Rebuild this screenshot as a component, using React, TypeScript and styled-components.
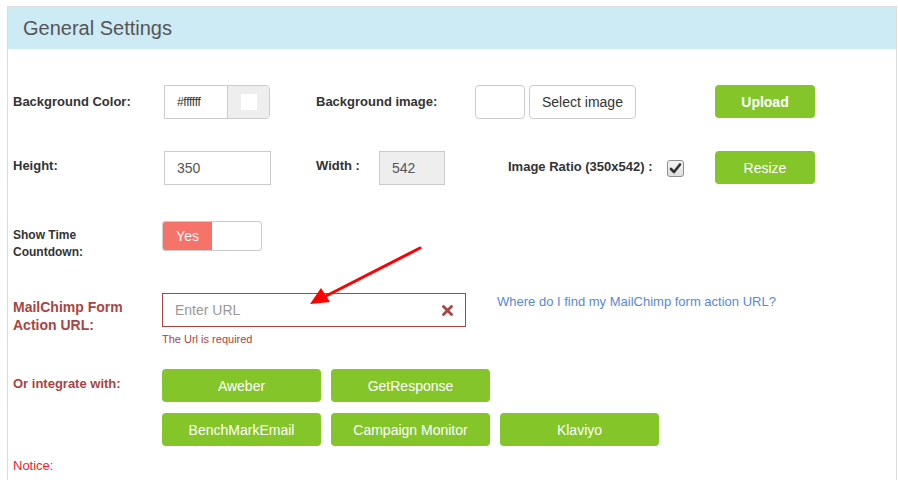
import React from 'react';
import styled, { createGlobalStyle } from 'styled-components';

const GlobalStyle = createGlobalStyle`
  html, body {
    margin: 0;
    padding: 0;
    background: #fff;
    font-family: "Liberation Sans", Arial, sans-serif;
    color: #333;
  }
`;

const Panel = styled.div`
  position: relative;
  margin: 6px 0 0 7px;
  width: 890px;
  height: 480px;
  box-sizing: border-box;
  border: 1px solid #dddddd;
  border-bottom: none;
`;

const Header = styled.div`
  height: 42px;
  background: #cdebf5;
  display: flex;
  align-items: center;
  padding-left: 15px;
  font-size: 20px;
  color: #555;
`;

const Body = styled.div`
  padding: 36px 0 0 5px;
`;

const Row = styled.div<{ $mb: number }>`
  display: flex;
  align-items: flex-start;
  margin-bottom: ${(p) => p.$mb}px;
`;

const Label = styled.div<{ $w: number; $error?: boolean; $small?: boolean; $pt?: number }>`
  width: ${(p) => p.$w}px;
  flex: none;
  box-sizing: border-box;
  padding-top: ${(p) => p.$pt ?? 8}px;
  font-size: ${(p) => (p.$small ? 12 : p.$error ? 14 : 13)}px;
  line-height: ${(p) => (p.$small ? 17 : 18)}px;
  font-weight: bold;
  color: ${(p) => (p.$error ? '#a94442' : '#333')};
`;

const Cell = styled.div<{ $w: number }>`
  width: ${(p) => p.$w}px;
  height: 34px;
  flex: none;
  display: flex;
  align-items: center;
  gap: 4px;
`;

const TextBox = styled.div<{ $w: number; $disabled?: boolean; $error?: boolean }>`
  width: ${(p) => p.$w}px;
  height: 34px;
  box-sizing: border-box;
  border: 1px solid ${(p) => (p.$error ? '#a94442' : '#cccccc')};
  background: ${(p) => (p.$disabled ? '#eeeeee' : '#fff')};
  display: flex;
  align-items: center;
  justify-content: space-between;
  padding: 0 12px;
  font-size: 14px;
  color: #555;
`;

const Placeholder = styled.span`
  color: #999;
`;

const ColorGroup = styled.div`
  display: flex;
  width: 106px;
  height: 34px;
  box-sizing: border-box;
  border: 1px solid #cccccc;
  border-radius: 0 4px 4px 0;
  overflow: hidden;
`;

const ColorText = styled.div`
  flex: 1;
  display: flex;
  align-items: center;
  padding-left: 12px;
  font-size: 12px;
  letter-spacing: -0.3px;
  color: #333;
`;

const ColorAddon = styled.div`
  width: 41px;
  background: #eeeeee;
  border-left: 1px solid #cccccc;
  display: flex;
  align-items: center;
  justify-content: center;
`;

const Swatch = styled.div`
  width: 16px;
  height: 16px;
  background: #fff;
`;

const ImageBox = styled.div`
  width: 50px;
  height: 34px;
  box-sizing: border-box;
  border: 1px solid #cccccc;
  border-radius: 4px;
`;

const DefaultButton = styled.button`
  height: 34px;
  padding: 0 12px;
  border: 1px solid #cccccc;
  border-radius: 4px;
  background: #fff;
  font-family: inherit;
  font-size: 14px;
  color: #333;
`;

const GreenButton = styled.button<{ $bold?: boolean }>`
  width: 100px;
  height: 33px;
  border: none;
  border-radius: 4px;
  background: #84c52a;
  color: #fff;
  font-family: inherit;
  font-size: 14px;
  font-weight: ${(p) => (p.$bold ? 'bold' : 'normal')};
  padding: 0;
`;

const IntegrationButton = styled(GreenButton)`
  width: 159px;
`;

const Toggle = styled.div`
  display: flex;
  width: 100px;
  height: 30px;
  box-sizing: border-box;
  border: 1px solid #cccccc;
  border-radius: 3px;
  overflow: hidden;
`;

const ToggleOn = styled.div`
  width: 49px;
  background: #f6736a;
  color: #fff;
  font-size: 14px;
  display: flex;
  align-items: center;
  justify-content: center;
`;

const FieldColumn = styled.div`
  display: flex;
  flex-direction: column;
  width: 335px;
  flex: none;
`;

const ErrorText = styled.div`
  margin-top: 5px;
  font-size: 11px;
  line-height: 14px;
  color: #a94442;
`;

const HelpLink = styled.a`
  margin-top: 1px;
  font-size: 13px;
  line-height: 16px;
  color: #5a88d2;
  text-decoration: none;
`;

const ButtonGrid = styled.div`
  display: flex;
  flex-direction: column;
  gap: 11px;
`;

const ButtonRow = styled.div`
  display: flex;
  gap: 10px;
`;

const Notice = styled.div`
  font-size: 13px;
  color: #f0262b;
`;

const Arrow = styled.svg`
  position: absolute;
  left: 296px;
  top: 234px;
  pointer-events: none;
`;

const CheckIcon = () => (
  <svg width="17" height="17" viewBox="0 0 17 17">
    <defs>
      <linearGradient id="cb" x1="0" y1="0" x2="0" y2="1">
        <stop offset="0" stopColor="#f4f4f4" />
        <stop offset="1" stopColor="#dedede" />
      </linearGradient>
    </defs>
    <rect x="0.5" y="0.5" width="16" height="16" rx="2.5" fill="url(#cb)" stroke="#8f8f8f" />
    <path d="M4 9 L7 12 L13 4.5" fill="none" stroke="#333" strokeWidth="2.6" strokeLinecap="round" strokeLinejoin="round" />
  </svg>
);

const TimesIcon = () => (
  <svg width="11" height="11" viewBox="0 0 11 11">
    <path d="M1.5 1.5 L9.5 9.5 M9.5 1.5 L1.5 9.5" stroke="#a94442" strokeWidth="2.8" strokeLinecap="round" />
  </svg>
);

const integrationRows = [
  ['Aweber', 'GetResponse'],
  ['BenchMarkEmail', 'Campaign Monitor', 'Klaviyo'],
];

export default function App() {
  return (
    <>
      <GlobalStyle />
      <Panel>
        <Header>General Settings</Header>
        <Body>
          <Row $mb={32}>
            <Label $w={151}>Background Color:</Label>
            <Cell $w={152}>
              <ColorGroup>
                <ColorText>#ffffff</ColorText>
                <ColorAddon>
                  <Swatch />
                </ColorAddon>
              </ColorGroup>
            </Cell>
            <Label $w={159}>Background image:</Label>
            <Cell $w={240}>
              <ImageBox />
              <DefaultButton type="button">Select image</DefaultButton>
            </Cell>
            <GreenButton type="button" $bold>Upload</GreenButton>
          </Row>

          <Row $mb={36}>
            <Label $w={151} $pt={6}>Height:</Label>
            <Cell $w={152}>
              <TextBox $w={107}>350</TextBox>
            </Cell>
            <Label $w={63} $pt={6}>Width :</Label>
            <Cell $w={129}>
              <TextBox $w={66} $disabled>542</TextBox>
            </Cell>
            <Label $w={159} $pt={7}>Image Ratio (350x542) :</Label>
            <Cell $w={48}>
              <CheckIcon />
            </Cell>
            <GreenButton type="button">Resize</GreenButton>
          </Row>

          <Row $mb={32}>
            <Label $w={149} $small $pt={6}>
              Show Time
              <br />
              Countdown:
            </Label>
            <Toggle>
              <ToggleOn>Yes</ToggleOn>
            </Toggle>
          </Row>

          <Row $mb={23}>
            <Label $w={149} $error $pt={5}>
              MailChimp Form
              <br />
              Action URL:
            </Label>
            <FieldColumn>
              <TextBox $w={304} $error>
                <Placeholder>Enter URL</Placeholder>
                <TimesIcon />
              </TextBox>
              <ErrorText>The Url is required</ErrorText>
            </FieldColumn>
            <HelpLink href="#">Where do I find my MailChimp form action URL?</HelpLink>
          </Row>

          <Row $mb={12}>
            <Label $w={149} $error $pt={6} style={{ fontSize: 13 }}>Or integrate with:</Label>
            <ButtonGrid>
              {integrationRows.map((row, i) => (
                <ButtonRow key={i}>
                  {row.map((name) => (
                    <IntegrationButton key={name} type="button">
                      {name}
                    </IntegrationButton>
                  ))}
                </ButtonRow>
              ))}
            </ButtonGrid>
          </Row>

          <Notice>Notice:</Notice>
        </Body>

        <Arrow width="130" height="70" viewBox="0 0 130 70">
          <line x1="116" y1="7" x2="22" y2="55" stroke="#ff0000" strokeWidth="3" strokeLinecap="round" />
          <polygon points="6,63 17,47 26,61" fill="#ff0000" />
        </Arrow>
      </Panel>
    </>
  );
}
